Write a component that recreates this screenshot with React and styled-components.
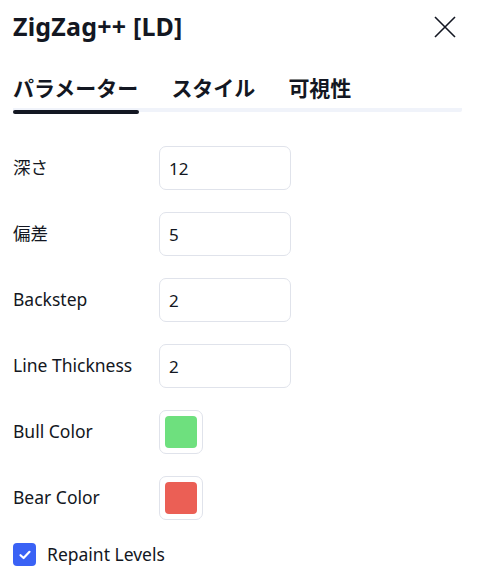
import React from 'react'
import styled, { createGlobalStyle } from 'styled-components'

const GlobalStyle = createGlobalStyle`
  body {
    margin: 0;
    background: #fff;
    font-family: "Noto Sans", "Noto Sans CJK JP", sans-serif;
    color: #131722;
  }
`

const Dialog = styled.div`
  width: 480px;
  height: 583px;
  box-sizing: border-box;
  padding: 0 18px 0 13px;
  overflow: hidden;
`

const Header = styled.div`
  display: flex;
  align-items: center;
  justify-content: space-between;
  height: 54px;
`

const Title = styled.h2`
  margin: 0;
  font-size: 25px;
  font-weight: 700;
  letter-spacing: 0.2px;
  line-height: 1;
  margin-top: -2px;
`

const CloseButton = styled.button`
  background: transparent;
  border: 0;
  padding: 0;
  width: 26px;
  height: 26px;
  display: flex;
  align-items: center;
  justify-content: center;
  cursor: pointer;
  margin-right: 4px;
`

const Tabs = styled.div`
  display: flex;
  gap: 33px;
  margin-top: 22px;
  height: 32px;
  align-items: flex-start;
  border-bottom: 4px solid #f0f3fa;
  border-radius: 2px;
  width: 449px;
`

const Tab = styled.div`
  font-size: 21px;
  font-weight: 700;
  line-height: 1;
  padding-top: 2px;
  position: relative;
  height: 100%;
  color: #131722;

  &::after {
    content: '';
    display: ${p => (p.$active ? 'block' : 'none')};
    position: absolute;
    left: 0;
    right: -1px;
    bottom: -4px;
    height: 4px;
    border-radius: 2px;
    background: #131722;
  }
`

const Form = styled.div`
  display: grid;
  grid-template-columns: 146px auto;
  row-gap: 22px;
  align-items: center;
  margin-top: 34px;
`

const Label = styled.div`
  font-size: 17.5px;
  line-height: 1;
  color: #131722;
`

const Input = styled.div`
  width: 132px;
  height: 44px;
  box-sizing: border-box;
  border: 1px solid #e0e3eb;
  border-radius: 7px;
  display: flex;
  align-items: center;
  padding-left: 9px;
  font-size: 17px;
`

const SwatchBox = styled.div`
  width: 44px;
  height: 44px;
  box-sizing: border-box;
  border: 1px solid #e0e3eb;
  border-radius: 7px;
  display: flex;
  align-items: center;
  justify-content: center;
`

const Swatch = styled.div`
  width: 32px;
  height: 32px;
  border-radius: 4px;
  background: ${p => p.$color};
`

const CheckRow = styled.div`
  display: flex;
  align-items: center;
  gap: 11px;
  margin-top: 23px;
`

const CheckBox = styled.div`
  width: 23px;
  height: 23px;
  border-radius: 4px;
  background: #3a62f5;
  display: flex;
  align-items: center;
  justify-content: center;
`

const fields = [
  { label: '深さ', value: '12' },
  { label: '偏差', value: '5' },
  { label: 'Backstep', value: '2' },
  { label: 'Line Thickness', value: '2' },
]

const colors = [
  { label: 'Bull Color', color: '#6ee07e' },
  { label: 'Bear Color', color: '#eb5f55' },
]

export default function App() {
  return (
    <>
      <GlobalStyle />
      <Dialog>
        <Header>
          <Title>ZigZag++ [LD]</Title>
          <CloseButton>
            <svg width="24" height="24" viewBox="0 0 24 24">
              <path d="M2 2 L22 22 M22 2 L2 22" stroke="#131722" strokeWidth="1.6" fill="none" />
            </svg>
          </CloseButton>
        </Header>
        <Tabs>
          <Tab $active>パラメーター</Tab>
          <Tab>スタイル</Tab>
          <Tab>可視性</Tab>
        </Tabs>
        <Form>
          {fields.map(f => (
            <React.Fragment key={f.label}>
              <Label>{f.label}</Label>
              <Input>{f.value}</Input>
            </React.Fragment>
          ))}
          {colors.map(c => (
            <React.Fragment key={c.label}>
              <Label>{c.label}</Label>
              <SwatchBox>
                <Swatch $color={c.color} />
              </SwatchBox>
            </React.Fragment>
          ))}
        </Form>
        <CheckRow>
          <CheckBox>
            <svg width="14" height="14" viewBox="0 0 14 14">
              <path d="M2.5 7.2 L5.6 10 L11.5 3.8" stroke="#fff" strokeWidth="2.2" fill="none" strokeLinecap="round" strokeLinejoin="round" />
            </svg>
          </CheckBox>
          <Label>Repaint Levels</Label>
        </CheckRow>
      </Dialog>
    </>
  )
}
